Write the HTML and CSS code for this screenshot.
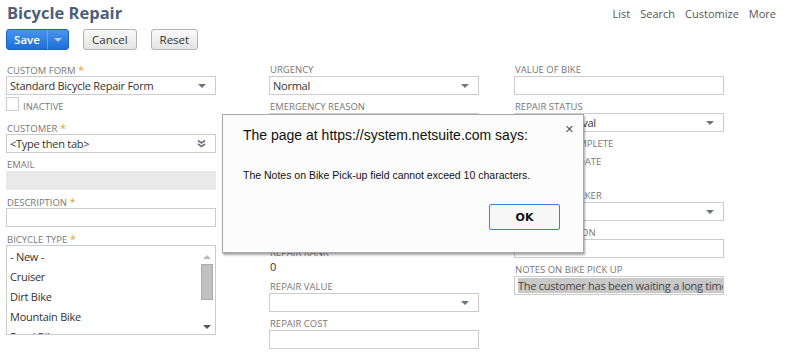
FILE: index.html
```html
<!DOCTYPE html>
<html>
    <head>
        <meta charset="utf-8">
        <meta name="viewport" content="width=device-width, initial-scale=1">
        <link rel="stylesheet" href="styles.css">
    </head>
    <body>
        <div class="page">
            <header class="pageHead">
                <div class="titleBlock">
                    <h1>Bicycle Repair</h1>
                    <div class="actions">
                        <div class="saveBtn">
                            <span class="saveLabel">Save</span>
                            <span class="saveMenu"><span class="caret caretLight"></span></span>
                        </div>
                        <button class="grayBtn">Cancel</button>
                        <button class="grayBtn">Reset</button>
                    </div>
                </div>
                <nav class="links">
                    <span>List</span><span>Search</span><span>Customize</span><span>More</span>
                </nav>
            </header>

            <main class="formGrid">
                <!-- columna 1 -->
                <section class="col">
                    <div class="group">
                        <div class="label">Custom Form <span class="req">*</span></div>
                        <div class="field select"><span>Standard Bicycle Repair Form</span><span class="caret"></span></div>
                    </div>
                    <div class="checkRow tall"><span class="box"></span><span class="label">Inactive</span></div>
                    <div class="group">
                        <div class="label">Customer <span class="req">*</span></div>
                        <div class="field select">
                            <span>&lt;Type then tab&gt;</span>
                            <svg class="chevrons" width="9" height="9" viewBox="0 0 9 9">
                                <polyline points="1,1.5 4.5,4 8,1.5"></polyline>
                                <polyline points="1,5 4.5,7.5 8,5"></polyline>
                            </svg>
                        </div>
                    </div>
                    <div class="group">
                        <div class="label">Email</div>
                        <div class="field disabled"></div>
                    </div>
                    <div class="group">
                        <div class="label">Description <span class="req">*</span></div>
                        <div class="field"></div>
                    </div>
                    <div class="group">
                        <div class="label">Bicycle Type <span class="req">*</span></div>
                        <div class="listBox">
                            <ul class="options">
                                <li>- New -</li>
                                <li>Cruiser</li>
                                <li>Dirt Bike</li>
                                <li>Mountain Bike</li>
                                <li>Road Bike</li>
                            </ul>
                            <div class="scrollBar">
                                <span class="caret caretUp"></span>
                                <span class="thumb"></span>
                                <span class="dummy"></span>
                                <span class="caret"></span>
                            </div>
                        </div>
                    </div>
                </section>

                <!-- columna 2 -->
                <section class="col">
                    <div class="group">
                        <div class="label">Urgency</div>
                        <div class="field select"><span>Normal</span><span class="caret"></span></div>
                    </div>
                    <div class="group">
                        <div class="label">Emergency Reason</div>
                        <div class="field"></div>
                    </div>
                    <div class="group">
                        <div class="label">Date Received</div>
                        <div class="field"></div>
                    </div>
                    <div class="group">
                        <div class="label">Estimated Completion</div>
                        <div class="field"></div>
                    </div>
                    <div class="group tight">
                        <div class="label">Repair Description</div>
                        <div class="field"></div>
                    </div>
                    <div class="group">
                        <div class="label">Repair Rank</div>
                        <div class="value">0</div>
                    </div>
                    <div class="group">
                        <div class="label">Repair Value</div>
                        <div class="field select"><span></span><span class="caret"></span></div>
                    </div>
                    <div class="group">
                        <div class="label">Repair Cost</div>
                        <div class="field"></div>
                    </div>
                </section>

                <!-- columna 3 -->
                <section class="col">
                    <div class="group">
                        <div class="label">Value of Bike</div>
                        <div class="field"></div>
                    </div>
                    <div class="group">
                        <div class="label">Repair Status</div>
                        <div class="field select"><span>Needs Approval</span><span class="caret"></span></div>
                    </div>
                    <div class="checkRow"><span class="box"></span><span class="label">Repair Complete</span></div>
                    <div class="group">
                        <div class="label">Completion Date</div>
                        <div class="value"></div>
                    </div>
                    <div class="group">
                        <div class="label">Assigned Worker</div>
                        <div class="field select"><span></span><span class="caret"></span></div>
                    </div>
                    <div class="group">
                        <div class="label">Repair Location</div>
                        <div class="field"></div>
                    </div>
                    <div class="group">
                        <div class="label">Notes on Bike Pick Up</div>
                        <div class="field"><span class="selected">The customer has been waiting a long time</span></div>
                    </div>
                </section>
            </main>

            <!-- alerta del navegador -->
            <div class="dialog">
                <span class="close">&#x2715;</span>
                <p class="dialogTitle">The page at https://system.netsuite.com says:</p>
                <p class="dialogMsg">The Notes on Bike Pick-up field cannot exceed 10 characters.</p>
                <div class="dialogFoot">
                    <button class="okBtn">OK</button>
                </div>
            </div>
        </div>
    </body>
</html>
```

FILE: styles.css
```css
html,
body {
    background-color: #fff;
    height          : 100%;
    margin          : 0;
    overflow        : hidden;
    padding         : 0;
}

body {
    color      : #333;
    font-family: "Open Sans", "Liberation Sans", sans-serif;
    font-size  : 11px;
}

.page {
    padding : 0 0 0 6px;
    position: relative;
}

/* CABECERA */
.pageHead {
    display        : flex;
    justify-content: space-between;
}

.titleBlock h1 {
    color      : #4d5f79;
    font-size  : 16.5px;
    font-weight: 700;
    height     : 26px;
    line-height: 26px;
    margin     : 0 0 3px 1px;
}

.actions {
    align-items: center;
    display    : flex;
    gap        : 14px;
}

.saveBtn {
    background   : linear-gradient( #4a94ee, #1d6fd8 );
    border       : 1px solid #1a63c2;
    border-radius: 3px;
    box-sizing   : border-box;
    color        : #fff;
    display      : flex;
    font-size    : 11.5px;
    font-weight  : 600;
    height       : 21px;
    width        : 63px;
}

.saveLabel {
    flex       : 1 0 auto;
    line-height: 19px;
    text-align : center;
}

.saveMenu {
    align-items    : center;
    border-left    : 1px solid #6aa4ec;
    display        : flex;
    justify-content: center;
    width          : 20px;
}

.grayBtn {
    background   : linear-gradient( #fafafa, #e4e4e4 );
    border       : 1px solid #b3b3b3;
    border-radius: 3px;
    color        : #333;
    font-family  : "Open Sans", "Liberation Sans", sans-serif;
    font-size    : 11.5px;
    height       : 21px;
    padding      : 0 8px;
}

.links {
    color      : #555;
    display    : flex;
    font-size  : 11px;
    gap        : 10px;
    line-height: 14px;
    padding    : 7px 10px 0 0;
}

/* FORMULARIO */
.formGrid {
    display              : grid;
    grid-template-columns: 263px 245px 210px;
    padding-top          : 14px;
}

.col {
    display       : flex;
    flex-direction: column;
    width         : 210px;
}

.group {
    margin-bottom: 6px;
}

.group.tight {
    margin-bottom: 4px;
}

.label {
    color         : #777;
    font-size     : 9.5px;
    height        : 12px;
    line-height   : 12px;
    padding-left  : 1px;
    text-transform: uppercase;
    white-space   : nowrap;
}

.req {
    color    : #e4a23a;
    font-size: 11px;
}

.field {
    align-items   : center;
    border        : 1px solid #ccc;
    box-sizing    : border-box;
    display       : flex;
    height        : 19px;
    letter-spacing: -0.25px;
    overflow      : hidden;
    padding       : 0 3px;
    white-space   : nowrap;
}

.field.select {
    justify-content: space-between;
    padding-right  : 9px;
}

.field.disabled {
    background-color: #e9e9e9;
    border-color    : #e9e9e9;
}

.value {
    height      : 16px;
    line-height : 16px;
    padding-left: 1px;
}

.selected {
    background-color: #c8c8c8;
    color           : #444;
}

.caret {
    border-left : 4px solid transparent;
    border-right: 4px solid transparent;
    border-top  : 4px solid #6c7585;
    height      : 0;
    width       : 0;
}

.caretLight {
    border-top-color: #b7cdee;
}

.caretUp {
    border-bottom: 4px solid #bbb;
    border-top   : none;
}

.chevrons {
    fill        : none;
    stroke      : #6c7585;
    stroke-width: 1.8;
}

.checkRow {
    align-items  : flex-start;
    display      : flex;
    gap          : 3px;
    height       : 18px;
    margin       : -4px 0 4px;
}

.checkRow.tall {
    height: 21px;
}

.checkRow .box {
    border    : 1px solid #ccc;
    box-sizing: border-box;
    height    : 14px;
    width     : 13px;
}

.checkRow .label {
    line-height: 20px;
}

/* LISTA DE TIPOS */
.listBox {
    border    : 1px solid #ccc;
    box-sizing: border-box;
    display   : flex;
    height    : 90px;
    overflow  : hidden;
}

.options {
    color         : #333;
    flex          : 1 0 auto;
    letter-spacing: -0.25px;
    list-style    : none;
    margin        : 0;
    padding       : 1px 0 0 3px;
}

.options li {
    height     : 20px;
    line-height: 20px;
}

.scrollBar {
    align-items    : center;
    display        : flex;
    flex-direction : column;
    padding        : 9px 0 5px;
    width          : 16px;
}

.scrollBar .thumb {
    background-color: #c1c1c1;
    border          : 1px solid #aaa;
    height          : 34px;
    margin-top      : 5px;
    width           : 10px;
}

.scrollBar .dummy {
    flex: 1 0 auto;
}

.scrollBar .caret {
    border-top-color: #555;
}

/* ALERTA */
.dialog {
    background-color: #fcfcfc;
    border          : 1px solid #a8a8a8;
    box-shadow      : 1px 2px 2px rgba( 0, 0, 0, 0.35 );
    box-sizing      : border-box;
    color           : #111;
    height          : 139px;
    left            : 222px;
    padding         : 0 20px;
    position        : absolute;
    top             : 114px;
    width           : 362px;
}

.close {
    color      : #555;
    font-family: "DejaVu Sans", sans-serif;
    font-size  : 11px;
    font-weight: 700;
    position   : absolute;
    right      : 9px;
    top        : 8px;
}

.dialogTitle {
    font-family: "Liberation Sans", sans-serif;
    font-size  : 14px;
    line-height: 20px;
    margin     : 10px 0 0;
    white-space: nowrap;
}

.dialogMsg {
    font-family: "Liberation Sans", sans-serif;
    font-size  : 10.5px;
    line-height: 14px;
    margin     : 23px 0 0;
    white-space: nowrap;
}

.dialogFoot {
    display        : flex;
    justify-content: flex-end;
    padding        : 22px 3px 0 0;
}

.okBtn {
    background-color: #f7f7f7;
    border          : 1px solid #3d7fdc;
    border-radius   : 2px;
    color           : #111;
    font-family     : "DejaVu Sans", sans-serif;
    font-size       : 11px;
    font-weight     : 700;
    height          : 26px;
    width           : 71px;
}
```
